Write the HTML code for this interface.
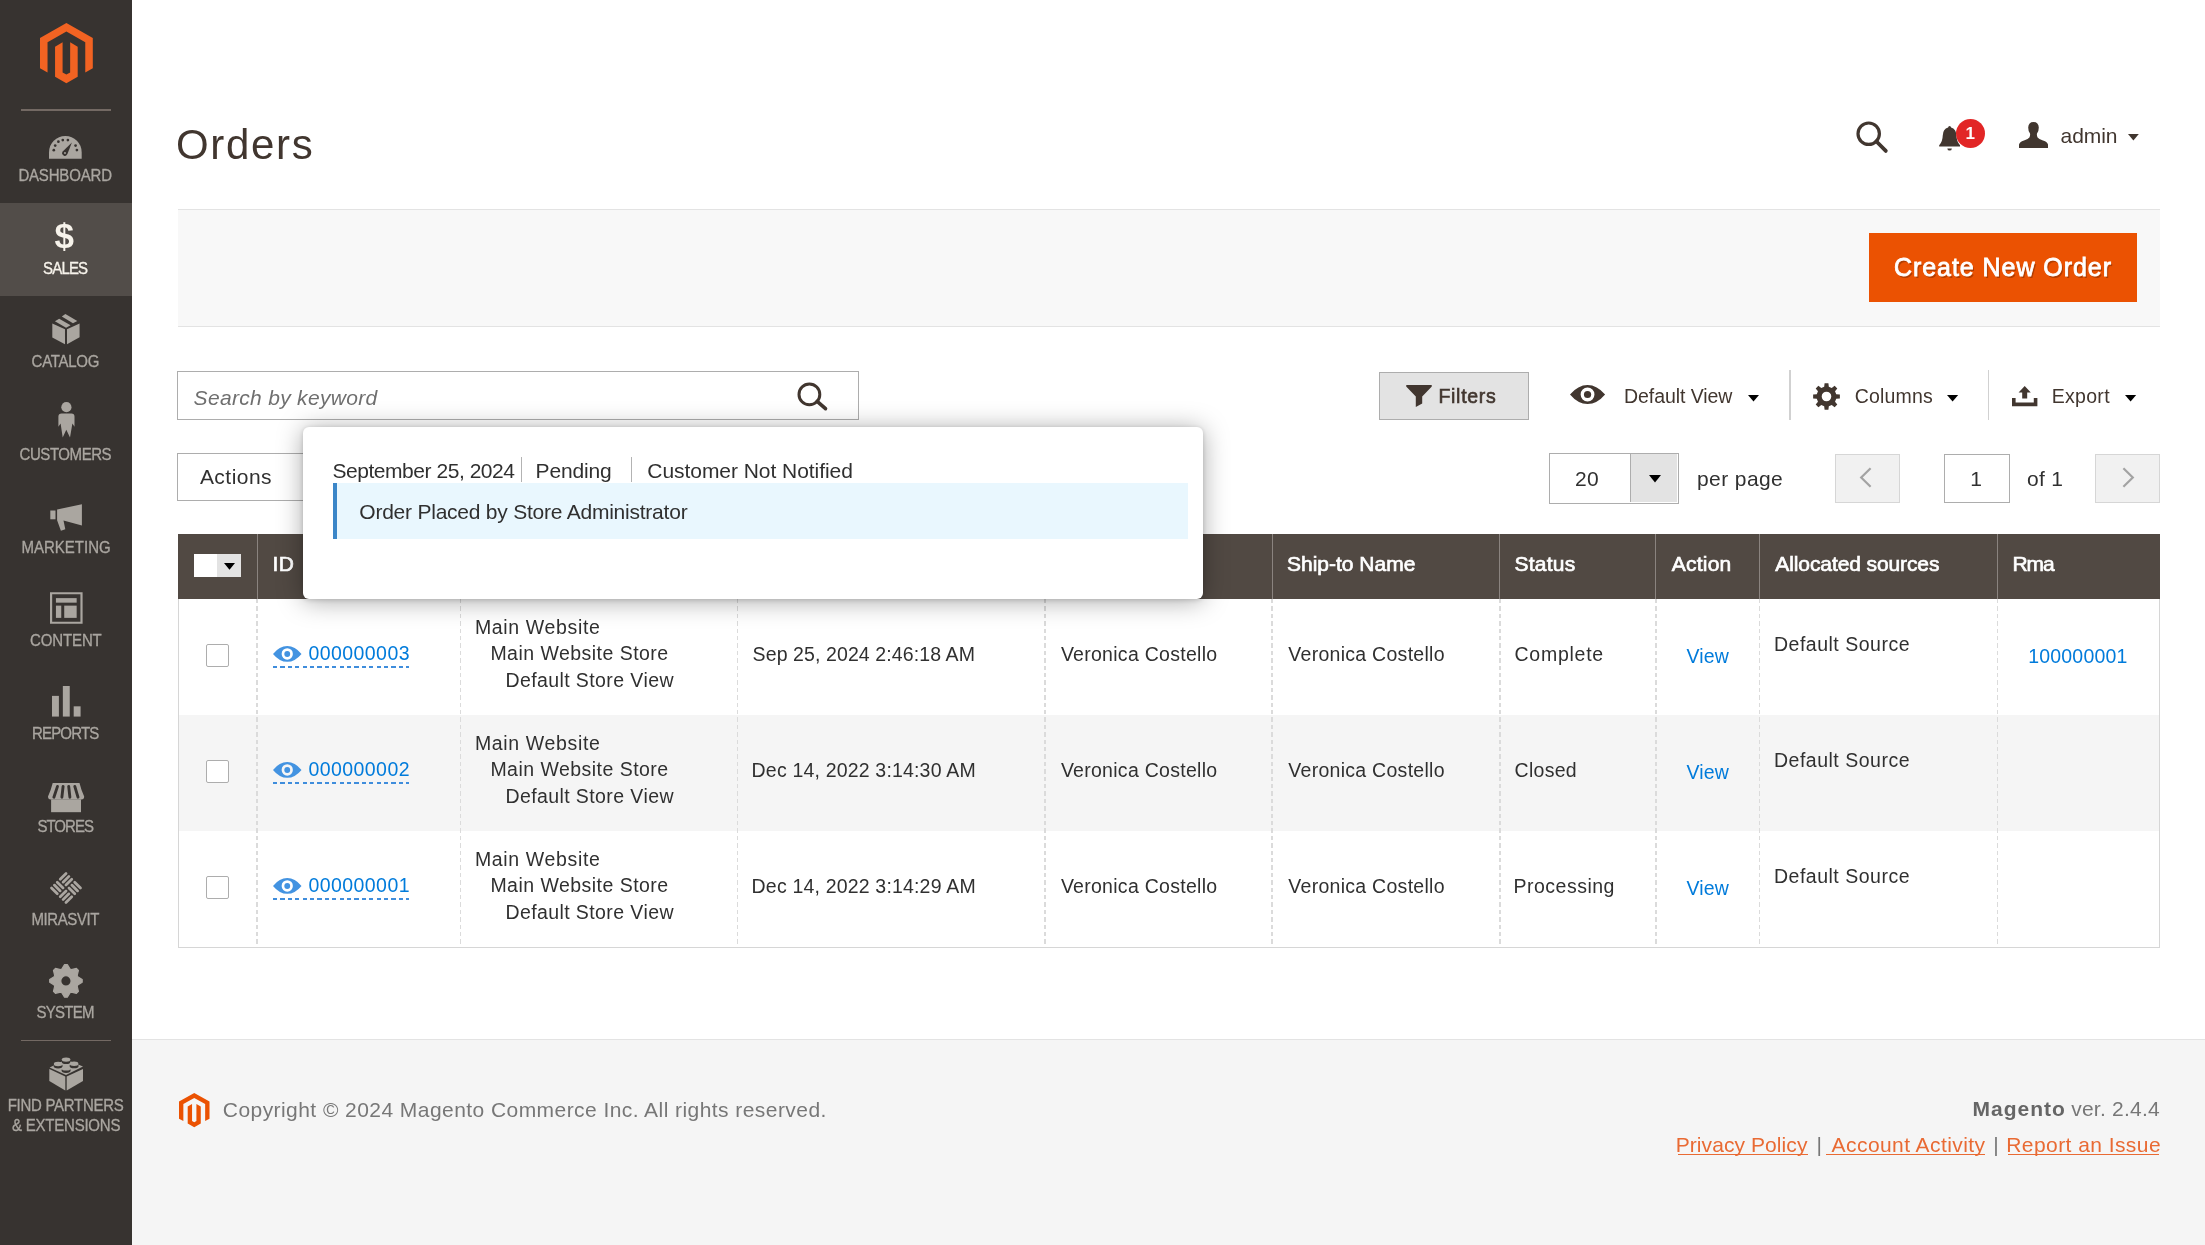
<!DOCTYPE html>
<html lang="en"><head><meta charset="utf-8"><title>Orders / Operations / Sales / Magento Admin</title>
<style>
html,body{margin:0;padding:0}
body{width:2205px;height:1245px;overflow:hidden;position:relative;background:#fff;font-family:"Liberation Sans",sans-serif}
#page{position:absolute;left:0;top:0;width:2205px;height:1245px;overflow:hidden;will-change:transform}
.b{position:absolute;box-sizing:border-box}
.i{position:absolute;display:block;overflow:visible}
.t{position:absolute;white-space:pre;line-height:1;font-family:"Liberation Sans",sans-serif}
.pop{position:absolute;left:0;top:0;z-index:5}
</style></head>
<body>
<div id="page">
<div class="b" style="left:0.0px;top:0.0px;width:132.0px;height:1245.0px;background:#373330;"></div>
<div class="b" style="left:0.0px;top:203.0px;width:132.0px;height:93.0px;background:#524d49;"></div>
<div class="b" style="left:20.7px;top:109.0px;width:90.6px;height:1.5px;background:#736963;"></div>
<div class="b" style="left:20.7px;top:1039.5px;width:90.6px;height:1.5px;background:#736963;"></div>
<svg class="i" style="left:39.8px;top:23.2px" width="52.8" height="60.2" viewBox="0 0 2145 2475" preserveAspectRatio="none"><g fill="#f26322"><path d="M1072.6 0L0 619.1v1236.6l306.2 177V795.8l766.4-442.5 766.4 442.5v1236.9l306.2-177V619.1z"/><path d="M1224.5 2032.8l-152.9 88.9-153.7-88.1V795.8l-306.2 176.9.5 1237.1 459.3 265.2 459.8-265.2V972.7l-306.2-176.9z"/></g></svg>
<svg class="i" style="left:49.2px;top:135.8px" width="32.7" height="22.8" viewBox="0 0 32.7 22.8" ><path fill="#aaa6a0" d="M0 22.8V16.4A16.35 16.35 0 0 1 32.7 16.4V22.8Z"/><circle cx="4.80" cy="14.20" r="1.35" fill="#373330"/><circle cx="6.20" cy="9.60" r="1.35" fill="#373330"/><circle cx="9.40" cy="5.70" r="1.35" fill="#373330"/><circle cx="13.80" cy="4.10" r="1.35" fill="#373330"/><circle cx="18.90" cy="4.10" r="1.35" fill="#373330"/><circle cx="26.60" cy="9.60" r="1.35" fill="#373330"/><circle cx="27.90" cy="14.10" r="1.35" fill="#373330"/><path fill="#373330" d="M22.9 6.6L18.4 18.1A2.7 2.7 0 1 1 13.7 15.5Z"/><circle cx="16" cy="17" r="0.95" fill="#aaa6a0"/></svg>
<svg class="i" style="left:51.5px;top:314.0px" width="27.7" height="30.2" viewBox="0 0 27.7 30.2" ><g fill="#aaa6a0"><path d="M2.9 7.2L7.2 4.7 18.6 11.2 14.1 13.7Z"/><path d="M9.8 2.5L13.4 0 25.3 6.9 21 9.2Z"/><path d="M.3 9.4L13 15.2V30.2L.3 23.5Z"/><path d="M15 15.2L27.6 9.4V23.2L15 30.2Z"/></g></svg>
<svg class="i" style="left:58.2px;top:401.8px" width="17.0" height="36.0" viewBox="0 0 17 36" ><g fill="#aaa6a0"><circle cx="8.4" cy="5.2" r="5.1"/><path d="M3.6 11.4H13.4Q16.5 11.4 16.5 14.5V24.8L14.4 21.5 12 35.6 8.3 27.8 4.7 35.6 2.6 21.5 .4 24.8V14.5Q.4 11.4 3.6 11.4Z"/></g></svg>
<svg class="i" style="left:50.0px;top:503.7px" width="32.0" height="27.0" viewBox="0 0 32 27" ><g fill="#aaa6a0"><path d="M.3 6.5H5.5V15.3H.3Z"/><path d="M7.1 5.6L31.9 .2V21.5L13.5 16.6 15.3 25.3 10.9 26.7 7.1 16.2Z"/></g></svg>
<svg class="i" style="left:49.6px;top:592.0px" width="32.6" height="32.0" viewBox="0 0 33 32" ><g fill="#aaa6a0"><path fill-rule="evenodd" d="M0 0H33V32H0ZM2.2 2.2V29.8H30.8V2.2Z"/><path d="M6 6H27V10.6H6Z"/><path d="M6 13.6H11.4V26H6Z"/><path d="M14.4 13.6H27V26H14.4Z"/></g></svg>
<svg class="i" style="left:51.7px;top:686.4px" width="28.6" height="30.6" viewBox="0 0 29 31" ><g fill="#aaa6a0"><path d="M0 10H7V31H0Z"/><path d="M11 0H18V31H11Z"/><path d="M22 20.6H29V31H22Z"/></g></svg>
<svg class="i" style="left:47.8px;top:783.0px" width="36.2" height="29.2" viewBox="0 0 36.2 29.2" ><g fill="#aaa6a0"><path d="M4.7 0H31.5Q33.5 8 36.2 13.6Q36.2 16.6 33.4 16.6H2.8Q0 16.6 0 13.6Q2.7 8 4.7 0Z"/><path d="M3.1 16.4H33V29.2H3.1Z"/></g><path d="M9.5 3.4L5.9 14.2M15.1 3.4L13.9 14.2M20.7 3.4L21.9 14.2M26.8 3.4L30 14.2" stroke="#373330" stroke-width="2.9" stroke-linecap="round" fill="none"/></svg>
<svg class="i" style="left:49.0px;top:871.0px" width="34.0" height="34.0" viewBox="-17 -17 34 34" ><g fill="#aaa6a0" transform="rotate(45)"><rect x="-11.60" y="-11.60" width="2.75" height="10.85" rx="1.3"/><rect x="-7.55" y="-11.60" width="2.75" height="10.85" rx="1.3"/><rect x="-3.50" y="-11.60" width="2.75" height="10.85" rx="1.3"/><rect x="-11.60" y="0.75" width="10.85" height="2.75" rx="1.3"/><rect x="-11.60" y="4.80" width="10.85" height="2.75" rx="1.3"/><rect x="-11.60" y="8.85" width="10.85" height="2.75" rx="1.3"/><rect x="0.75" y="-11.60" width="10.85" height="2.75" rx="1.3"/><rect x="0.75" y="-7.55" width="10.85" height="2.75" rx="1.3"/><rect x="0.75" y="-3.50" width="10.85" height="2.75" rx="1.3"/><rect x="0.75" y="0.75" width="2.75" height="10.85" rx="1.3"/><rect x="4.80" y="0.75" width="2.75" height="10.85" rx="1.3"/><rect x="8.85" y="0.75" width="2.75" height="10.85" rx="1.3"/></g></svg>
<svg class="i" style="left:48.9px;top:963.8px" width="33.9" height="33.8" viewBox="0 0 34 34" ><path fill="#aaa6a0" stroke="#aaa6a0" stroke-width="1.2" stroke-linejoin="round" fill-rule="evenodd" d="M12.83 5.11 L15.58 0.66 L18.42 0.66 L21.17 5.11 L22.45 5.64 L27.55 4.45 L29.55 6.45 L28.36 11.55 L28.89 12.83 L33.34 15.58 L33.34 18.42 L28.89 21.17 L28.36 22.45 L29.55 27.55 L27.55 29.55 L22.45 28.36 L21.17 28.89 L18.42 33.34 L15.58 33.34 L12.83 28.89 L11.55 28.36 L6.45 29.55 L4.45 27.55 L5.64 22.45 L5.11 21.17 L0.66 18.42 L0.66 15.58 L5.11 12.83 L5.64 11.55 L4.45 6.45 L6.45 4.45 L11.55 5.64Z M11.80 17.00 a5.20 5.20 0 1 0 10.40 0 a5.20 5.20 0 1 0 -10.40 0Z"/></svg>
<svg class="i" style="left:48.6px;top:1056.6px" width="34.2" height="33.8" viewBox="0 0 34.2 33.8" ><g fill="#aaa6a0"><path d="M17.1 2.4L34 9.6 17 18 .6 10.6Z"/><path d="M.3 12L16.3 19.4V33.6L.3 24Z"/><path d="M17.7 19.4L34 12V24L17.7 33.6Z"/></g><ellipse cx="17.1" cy="4.7" rx="4.5" ry="2.4" fill="#373330"/><ellipse cx="17.1" cy="2.6" rx="4.3" ry="2.2" fill="#aaa6a0"/><ellipse cx="9.1" cy="9.1" rx="4.5" ry="2.4" fill="#373330"/><ellipse cx="9.1" cy="7.0" rx="4.3" ry="2.2" fill="#aaa6a0"/><ellipse cx="25.1" cy="8.9" rx="4.5" ry="2.4" fill="#373330"/><ellipse cx="25.1" cy="6.8" rx="4.3" ry="2.2" fill="#aaa6a0"/><ellipse cx="17.1" cy="13.5" rx="4.5" ry="2.4" fill="#373330"/><ellipse cx="17.1" cy="11.4" rx="4.3" ry="2.2" fill="#aaa6a0"/></svg>
<span class="t" style="left:54.4px;top:217.6px;font-size:35px;font-weight:700;color:#f7f3eb">$</span>
<svg class="i" style="left:1853.8px;top:118.7px" width="35.8" height="35.9" viewBox="0 0 35.80 35.90" ><circle cx="14.70" cy="14.70" r="10.70" fill="none" stroke="#41362f" stroke-width="3.20"/><path d="M22.24 22.29L31.80 31.90" stroke="#41362f" stroke-width="3.80" stroke-linecap="round"/></svg>
<svg class="i" style="left:1939.2px;top:125.6px" width="21.2" height="24.8" viewBox="0 0 21 25" ><g fill="#41362f"><path d="M10.5 0Q11.9 0 12 1.6Q17.2 3 17.4 9.6Q17.6 16 21 19.4V20.6H0V19.4Q3.4 16 3.6 9.6Q3.8 3 9 1.6Q9.1 0 10.5 0Z"/><path d="M8.2 22.6H12.8Q12.6 24.8 10.5 24.8T8.2 22.6Z"/></g></svg>
<svg class="i" style="left:2018.9px;top:121.5px" width="29.0" height="26.0" viewBox="0 0 29 26" ><path fill="#41362f" d="M14.5 0Q19.6 0 19.8 5.6Q19.8 9.4 18 11.6Q17.6 13.8 18.6 15.4Q19.6 17 24 18.4Q28.6 19.8 29 22.6V26H0V22.6Q.4 19.8 5 18.4Q9.4 17 10.4 15.4Q11.4 13.8 11 11.6Q9.2 9.4 9.2 5.6Q9.4 0 14.5 0Z"/></svg>
<svg class="i" style="left:2127.8px;top:133.8px" width="10.8" height="6.6" viewBox="0 0 10 6" preserveAspectRatio="none"><path fill="#41362f" d="M0 0H10L5 6Z"/></svg>
<div class="b" style="left:1955.8px;top:118.7px;width:29.2px;height:29.2px;background:#e22626;border-radius:50%;"></div>
<span class="t" style="left:1965.6px;top:124.6px;font-size:17px;font-weight:700;color:#fff">1</span>
<div class="b" style="left:178.0px;top:209.0px;width:1982.0px;height:117.5px;background:#f8f8f8;border-top:1.5px solid #e3e3e3;border-bottom:1.5px solid #e3e3e3;"></div>
<div class="b" style="left:1869.4px;top:233.2px;width:268.0px;height:69.0px;background:#eb5202;"></div>
<div class="b" style="left:177.4px;top:371.1px;width:681.6px;height:48.7px;border:1.5px solid #adadad;background:#fff;"></div>
<div class="b" style="left:1379.0px;top:371.6px;width:150.0px;height:48.6px;border:1.5px solid #adadad;background:#e3e3e3;"></div>
<div class="b" style="left:1789.4px;top:369.5px;width:1.3px;height:50.0px;background:#d1d1d1;"></div>
<div class="b" style="left:1988.1px;top:369.5px;width:1.3px;height:50.0px;background:#d1d1d1;"></div>
<div class="b" style="left:177.4px;top:453.0px;width:242.6px;height:48.3px;border:1.5px solid #adadad;background:#fff;"></div>
<div class="b" style="left:1549.3px;top:452.8px;width:129.7px;height:50.8px;border:1.5px solid #adadad;background:#fff;"></div>
<div class="b" style="left:1630.4px;top:454.3px;width:47.1px;height:47.8px;background:#e3e3e3;border-left:1.5px solid #adadad;"></div>
<div class="b" style="left:1834.6px;top:454.0px;width:65.8px;height:49.0px;background:#f1f1f1;border:1.5px solid #d6d6d6;"></div>
<div class="b" style="left:1944.2px;top:454.0px;width:65.4px;height:49.0px;border:1.5px solid #adadad;background:#fff;"></div>
<div class="b" style="left:2094.7px;top:454.0px;width:64.9px;height:49.0px;background:#f1f1f1;border:1.5px solid #d6d6d6;"></div>
<div class="b" style="left:177.6px;top:534.0px;width:1982.1px;height:64.5px;background:#514943;"></div>
<div class="b" style="left:256.5px;top:534.0px;width:1.2px;height:64.5px;background:#8a837f;"></div>
<div class="b" style="left:460.0px;top:534.0px;width:1.2px;height:64.5px;background:#8a837f;"></div>
<div class="b" style="left:736.7px;top:534.0px;width:1.2px;height:64.5px;background:#8a837f;"></div>
<div class="b" style="left:1044.4px;top:534.0px;width:1.2px;height:64.5px;background:#8a837f;"></div>
<div class="b" style="left:1271.5px;top:534.0px;width:1.2px;height:64.5px;background:#8a837f;"></div>
<div class="b" style="left:1499.2px;top:534.0px;width:1.2px;height:64.5px;background:#8a837f;"></div>
<div class="b" style="left:1655.3px;top:534.0px;width:1.2px;height:64.5px;background:#8a837f;"></div>
<div class="b" style="left:1758.9px;top:534.0px;width:1.2px;height:64.5px;background:#8a837f;"></div>
<div class="b" style="left:1996.7px;top:534.0px;width:1.2px;height:64.5px;background:#8a837f;"></div>
<div class="b" style="left:177.6px;top:715.0px;width:1982.1px;height:116.0px;background:#f5f5f5;"></div>
<div class="b" style="left:177.6px;top:598.5px;width:1982.1px;height:349.3px;border:1.5px solid #d6d6d6;border-top:none;"></div>
<div class="b" style="left:256.4px;top:598.5px;width:1.5px;height:347.8px;background:repeating-linear-gradient(180deg,#dbdbdb 0,#dbdbdb 4.5px,transparent 4.5px,transparent 7.4px);"></div>
<div class="b" style="left:459.9px;top:598.5px;width:1.5px;height:347.8px;background:repeating-linear-gradient(180deg,#dbdbdb 0,#dbdbdb 4.5px,transparent 4.5px,transparent 7.4px);"></div>
<div class="b" style="left:736.5px;top:598.5px;width:1.5px;height:347.8px;background:repeating-linear-gradient(180deg,#dbdbdb 0,#dbdbdb 4.5px,transparent 4.5px,transparent 7.4px);"></div>
<div class="b" style="left:1044.2px;top:598.5px;width:1.5px;height:347.8px;background:repeating-linear-gradient(180deg,#dbdbdb 0,#dbdbdb 4.5px,transparent 4.5px,transparent 7.4px);"></div>
<div class="b" style="left:1271.3px;top:598.5px;width:1.5px;height:347.8px;background:repeating-linear-gradient(180deg,#dbdbdb 0,#dbdbdb 4.5px,transparent 4.5px,transparent 7.4px);"></div>
<div class="b" style="left:1499.0px;top:598.5px;width:1.5px;height:347.8px;background:repeating-linear-gradient(180deg,#dbdbdb 0,#dbdbdb 4.5px,transparent 4.5px,transparent 7.4px);"></div>
<div class="b" style="left:1655.2px;top:598.5px;width:1.5px;height:347.8px;background:repeating-linear-gradient(180deg,#dbdbdb 0,#dbdbdb 4.5px,transparent 4.5px,transparent 7.4px);"></div>
<div class="b" style="left:1758.8px;top:598.5px;width:1.5px;height:347.8px;background:repeating-linear-gradient(180deg,#dbdbdb 0,#dbdbdb 4.5px,transparent 4.5px,transparent 7.4px);"></div>
<div class="b" style="left:1996.5px;top:598.5px;width:1.5px;height:347.8px;background:repeating-linear-gradient(180deg,#dbdbdb 0,#dbdbdb 4.5px,transparent 4.5px,transparent 7.4px);"></div>
<div class="b" style="left:194.0px;top:553.6px;width:46.7px;height:23.1px;background:#fff;"></div>
<div class="b" style="left:217.0px;top:553.6px;width:23.7px;height:23.1px;background:#e3e3e3;"></div>
<div class="b" style="left:205.6px;top:643.6px;width:23.4px;height:23.4px;border:1.5px solid #adadad;border-radius:2px;background:#fff;"></div>
<div class="b" style="left:272.9px;top:666.4px;width:136.6px;height:1.6px;background:repeating-linear-gradient(90deg,#3f8ddc 0,#3f8ddc 4.2px,transparent 4.2px,transparent 7.4px);"></div>
<div class="b" style="left:205.6px;top:759.6px;width:23.4px;height:23.4px;border:1.5px solid #adadad;border-radius:2px;background:#fff;"></div>
<div class="b" style="left:272.9px;top:782.4px;width:136.6px;height:1.6px;background:repeating-linear-gradient(90deg,#3f8ddc 0,#3f8ddc 4.2px,transparent 4.2px,transparent 7.4px);"></div>
<div class="b" style="left:205.6px;top:875.6px;width:23.4px;height:23.4px;border:1.5px solid #adadad;border-radius:2px;background:#fff;"></div>
<div class="b" style="left:272.9px;top:898.4px;width:136.6px;height:1.6px;background:repeating-linear-gradient(90deg,#3f8ddc 0,#3f8ddc 4.2px,transparent 4.2px,transparent 7.4px);"></div>
<svg class="i" style="left:272.9px;top:646.0px" width="28.5" height="15.8" viewBox="0 0 35 19" preserveAspectRatio="none"><path fill="#4393e1" fill-rule="evenodd" d="M0 9.5Q8 0 17.5 0T35 9.5Q27 19 17.5 19T0 9.5ZM17.5 2.6A6.9 6.9 0 1 0 17.5 16.4A6.9 6.9 0 1 0 17.5 2.6Z"/><circle cx="17.5" cy="9.5" r="3.6" fill="#4393e1"/></svg>
<svg class="i" style="left:272.9px;top:762.0px" width="28.5" height="15.8" viewBox="0 0 35 19" preserveAspectRatio="none"><path fill="#4393e1" fill-rule="evenodd" d="M0 9.5Q8 0 17.5 0T35 9.5Q27 19 17.5 19T0 9.5ZM17.5 2.6A6.9 6.9 0 1 0 17.5 16.4A6.9 6.9 0 1 0 17.5 2.6Z"/><circle cx="17.5" cy="9.5" r="3.6" fill="#4393e1"/></svg>
<svg class="i" style="left:272.9px;top:878.0px" width="28.5" height="15.8" viewBox="0 0 35 19" preserveAspectRatio="none"><path fill="#4393e1" fill-rule="evenodd" d="M0 9.5Q8 0 17.5 0T35 9.5Q27 19 17.5 19T0 9.5ZM17.5 2.6A6.9 6.9 0 1 0 17.5 16.4A6.9 6.9 0 1 0 17.5 2.6Z"/><circle cx="17.5" cy="9.5" r="3.6" fill="#4393e1"/></svg>
<svg class="i" style="left:794.9px;top:379.9px" width="34.5" height="32.7" viewBox="0 0 34.50 32.70" ><circle cx="14.40" cy="14.40" r="10.40" fill="none" stroke="#41362f" stroke-width="3.00"/><path d="M22.18 21.31L30.50 28.70" stroke="#41362f" stroke-width="3.60" stroke-linecap="round"/></svg>
<svg class="i" style="left:1405.5px;top:384.9px" width="26.0" height="22.0" viewBox="0 0 26 22" ><path fill="#41362f" d="M.6 0H25.4Q26.4 .6 25.6 1.8L16.2 11.6V18.6L9.8 22V11.6L.4 1.8Q-.4 .6 .6 0Z"/></svg>
<svg class="i" style="left:1569.9px;top:385.3px" width="35.1" height="19.0" viewBox="0 0 35 19" preserveAspectRatio="none"><path fill="#41362f" fill-rule="evenodd" d="M0 9.5Q8 0 17.5 0T35 9.5Q27 19 17.5 19T0 9.5ZM17.5 2.6A6.9 6.9 0 1 0 17.5 16.4A6.9 6.9 0 1 0 17.5 2.6Z"/><circle cx="17.5" cy="9.5" r="3.6" fill="#41362f"/></svg>
<svg class="i" style="left:1748.1px;top:394.9px" width="11.0" height="6.6" viewBox="0 0 10 6" preserveAspectRatio="none"><path fill="#000" d="M0 0H10L5 6Z"/></svg>
<svg class="i" style="left:1812.8px;top:383.2px" width="27.0" height="27.0" viewBox="0 0 27 27" ><path fill="#41362f" fill-rule="evenodd" d="M11.17 3.78 L11.60 0.13 L15.40 0.13 L15.83 3.78 L18.72 4.97 L21.61 2.70 L24.30 5.39 L22.03 8.28 L23.22 11.17 L26.87 11.60 L26.87 15.40 L23.22 15.83 L22.03 18.72 L24.30 21.61 L21.61 24.30 L18.72 22.03 L15.83 23.22 L15.40 26.87 L11.60 26.87 L11.17 23.22 L8.28 22.03 L5.39 24.30 L2.70 21.61 L4.97 18.72 L3.78 15.83 L0.13 15.40 L0.13 11.60 L3.78 11.17 L4.97 8.28 L2.70 5.39 L5.39 2.70 L8.28 4.97Z M8.70 13.50 a4.80 4.80 0 1 0 9.60 0 a4.80 4.80 0 1 0 -9.60 0Z"/></svg>
<svg class="i" style="left:1947.3px;top:394.9px" width="11.2" height="6.6" viewBox="0 0 10 6" preserveAspectRatio="none"><path fill="#000" d="M0 0H10L5 6Z"/></svg>
<svg class="i" style="left:2012.3px;top:386.2px" width="25.4" height="20.2" viewBox="0 0 25.4 20.2" ><g fill="#41362f"><path d="M0 12H3.6V16.6H21.8V12H25.4V20.2H0Z"/><path d="M12.7 0L18.8 6.4H15.2V12.4H10.2V6.4H6.6Z"/></g></svg>
<svg class="i" style="left:2124.6px;top:394.9px" width="11.2" height="6.6" viewBox="0 0 10 6" preserveAspectRatio="none"><path fill="#000" d="M0 0H10L5 6Z"/></svg>
<svg class="i" style="left:1649.4px;top:474.8px" width="12.0" height="7.4" viewBox="0 0 10 6" preserveAspectRatio="none"><path fill="#000" d="M0 0H10L5 6Z"/></svg>
<svg class="i" style="left:1858.0px;top:466.0px" width="16.0" height="23.0" viewBox="0 0 16 23" ><path d="M12.6 2.2L3.2 11.5 12.6 20.8" fill="none" stroke="#a3a3a3" stroke-width="2.2"/></svg>
<svg class="i" style="left:2119.5px;top:466.0px" width="16.0" height="23.0" viewBox="0 0 16 23" ><path d="M3.4 2.2L12.8 11.5 3.4 20.8" fill="none" stroke="#a3a3a3" stroke-width="2.2"/></svg>
<svg class="i" style="left:223.6px;top:562.5px" width="11.0" height="6.8" viewBox="0 0 10 6" preserveAspectRatio="none"><path fill="#000" d="M0 0H10L5 6Z"/></svg>
<div class="b" style="left:132.0px;top:1038.5px;width:2073.0px;height:206.5px;background:#f5f5f5;border-top:1.5px solid #e3e3e3;"></div>
<svg class="i" style="left:178.5px;top:1093.2px" width="30.5" height="34.2" viewBox="0 0 2145 2475" preserveAspectRatio="none"><g fill="#eb5202"><path d="M1072.6 0L0 619.1v1236.6l306.2 177V795.8l766.4-442.5 766.4 442.5v1236.9l306.2-177V619.1z"/><path d="M1224.5 2032.8l-152.9 88.9-153.7-88.1V795.8l-306.2 176.9.5 1237.1 459.3 265.2 459.8-265.2V972.7l-306.2-176.9z"/></g></svg>
<div class="b" style="left:1677.7px;top:1153.6px;width:130.1px;height:1.5px;background:#e96a33;"></div>
<div class="b" style="left:1825.8px;top:1153.6px;width:159.3px;height:1.5px;background:#e96a33;"></div>
<div class="b" style="left:2008.2px;top:1153.6px;width:151.1px;height:1.5px;background:#e96a33;"></div>
<span class="t" style="left:18.4px;top:168.3px;font-size:15px;color:#aaa6a0;letter-spacing:-0.18px;transform:scaleY(1.09);transform-origin:0 12.7px;-webkit-text-stroke:0.3px #aaa6a0;">DASHBOARD</span>
<span class="t" style="left:43.1px;top:261.3px;font-size:15px;color:#f7f3eb;letter-spacing:-0.85px;transform:scaleY(1.09);transform-origin:0 12.7px;-webkit-text-stroke:0.3px #f7f3eb;">SALES</span>
<span class="t" style="left:31.6px;top:354.3px;font-size:15px;color:#aaa6a0;letter-spacing:-0.27px;transform:scaleY(1.09);transform-origin:0 12.7px;-webkit-text-stroke:0.3px #aaa6a0;">CATALOG</span>
<span class="t" style="left:19.5px;top:447.3px;font-size:15px;color:#aaa6a0;letter-spacing:-0.43px;transform:scaleY(1.09);transform-origin:0 12.7px;-webkit-text-stroke:0.3px #aaa6a0;">CUSTOMERS</span>
<span class="t" style="left:21.6px;top:540.3px;font-size:15px;color:#aaa6a0;letter-spacing:-0.02px;transform:scaleY(1.09);transform-origin:0 12.7px;-webkit-text-stroke:0.3px #aaa6a0;">MARKETING</span>
<span class="t" style="left:30.0px;top:633.3px;font-size:15px;color:#aaa6a0;letter-spacing:-0.12px;transform:scaleY(1.09);transform-origin:0 12.7px;-webkit-text-stroke:0.3px #aaa6a0;">CONTENT</span>
<span class="t" style="left:32.0px;top:726.3px;font-size:15px;color:#aaa6a0;letter-spacing:-0.83px;transform:scaleY(1.09);transform-origin:0 12.7px;-webkit-text-stroke:0.3px #aaa6a0;">REPORTS</span>
<span class="t" style="left:37.4px;top:819.3px;font-size:15px;color:#aaa6a0;letter-spacing:-0.96px;transform:scaleY(1.09);transform-origin:0 12.7px;-webkit-text-stroke:0.3px #aaa6a0;">STORES</span>
<span class="t" style="left:31.4px;top:912.3px;font-size:15px;color:#aaa6a0;letter-spacing:-0.40px;transform:scaleY(1.09);transform-origin:0 12.7px;-webkit-text-stroke:0.3px #aaa6a0;">MIRASVIT</span>
<span class="t" style="left:36.4px;top:1005.3px;font-size:15px;color:#aaa6a0;letter-spacing:-0.70px;transform:scaleY(1.09);transform-origin:0 12.7px;-webkit-text-stroke:0.3px #aaa6a0;">SYSTEM</span>
<span class="t" style="left:7.7px;top:1098.3px;font-size:15px;color:#aaa6a0;letter-spacing:-0.28px;transform:scaleY(1.09);transform-origin:0 12.7px;-webkit-text-stroke:0.3px #aaa6a0;">FIND PARTNERS</span>
<span class="t" style="left:12.0px;top:1118.3px;font-size:15px;color:#aaa6a0;letter-spacing:-0.22px;transform:scaleY(1.09);transform-origin:0 12.7px;-webkit-text-stroke:0.3px #aaa6a0;">&amp; EXTENSIONS</span>
<span class="t" style="left:176.0px;top:123.8px;font-size:42px;color:#41362f;letter-spacing:1.66px;">Orders</span>
<span class="t" style="left:2060.6px;top:125.3px;font-size:21px;color:#41362f;letter-spacing:-0.07px;">admin</span>
<span class="t" style="left:1893.9px;top:255.1px;font-size:25px;color:#ffffff;letter-spacing:0.95px;-webkit-text-stroke:0.80px #ffffff;text-shadow:1.5px 1.5px 0 rgba(0,0,0,.25);">Create New Order</span>
<span class="t" style="left:193.6px;top:386.5px;font-size:21px;color:#6f6f6f;letter-spacing:0.31px;font-style:italic;">Search by keyword</span>
<span class="t" style="left:1438.4px;top:387.0px;font-size:19.5px;color:#41362f;letter-spacing:0.72px;-webkit-text-stroke:0.62px #41362f;">Filters</span>
<span class="t" style="left:1624.0px;top:387.0px;font-size:19.5px;color:#41362f;letter-spacing:-0.07px;">Default View</span>
<span class="t" style="left:1854.8px;top:387.0px;font-size:19.5px;color:#41362f;letter-spacing:0.15px;">Columns</span>
<span class="t" style="left:2051.7px;top:387.0px;font-size:19.5px;color:#41362f;letter-spacing:0.30px;">Export</span>
<span class="t" style="left:199.9px;top:466.4px;font-size:21px;color:#303030;letter-spacing:0.47px;">Actions</span>
<span class="t" style="left:1575.0px;top:468.1px;font-size:21px;color:#303030;letter-spacing:0.40px;">20</span>
<span class="t" style="left:1697.0px;top:468.1px;font-size:21px;color:#303030;letter-spacing:0.41px;">per page</span>
<span class="t" style="left:1970.3px;top:468.1px;font-size:21px;color:#303030;">1</span>
<span class="t" style="left:2027.0px;top:468.1px;font-size:21px;color:#303030;letter-spacing:0.33px;">of 1</span>
<span class="t" style="left:272.4px;top:553.2px;font-size:21px;color:#ffffff;letter-spacing:0.60px;-webkit-text-stroke:0.67px #ffffff;">ID</span>
<span class="t" style="left:1287.0px;top:553.2px;font-size:21px;color:#ffffff;-webkit-text-stroke:0.67px #ffffff;">Ship-to Name</span>
<span class="t" style="left:1514.5px;top:553.2px;font-size:21px;color:#ffffff;letter-spacing:0.24px;-webkit-text-stroke:0.67px #ffffff;">Status</span>
<span class="t" style="left:1671.7px;top:553.2px;font-size:21px;color:#ffffff;letter-spacing:0.24px;-webkit-text-stroke:0.67px #ffffff;">Action</span>
<span class="t" style="left:1775.3px;top:553.2px;font-size:21px;color:#ffffff;letter-spacing:-0.10px;-webkit-text-stroke:0.67px #ffffff;">Allocated sources</span>
<span class="t" style="left:2012.4px;top:553.2px;font-size:21px;color:#ffffff;letter-spacing:-1.00px;-webkit-text-stroke:0.67px #ffffff;">Rma</span>
<span class="t" style="left:222.8px;top:1098.5px;font-size:21px;color:#777777;letter-spacing:0.44px;">Copyright &copy; 2024 Magento Commerce Inc. All rights reserved.</span>
<span class="t" style="left:1972.6px;top:1098.3px;font-size:21px;color:#666666;letter-spacing:1.00px;font-weight:700;">Magento</span>
<span class="t" style="left:2071.2px;top:1098.3px;font-size:21px;color:#777777;letter-spacing:0.24px;">ver. 2.4.4</span>
<span class="t" style="left:1675.7px;top:1134.2px;font-size:21px;color:#e96a33;letter-spacing:0.08px;">Privacy Policy</span>
<span class="t" style="left:1816.6px;top:1134.2px;font-size:21px;color:#777777;">|</span>
<span class="t" style="left:1831.6px;top:1134.2px;font-size:21px;color:#e96a33;letter-spacing:0.43px;">Account Activity</span>
<span class="t" style="left:1993.3px;top:1134.2px;font-size:21px;color:#777777;">|</span>
<span class="t" style="left:2006.2px;top:1134.2px;font-size:21px;color:#e96a33;letter-spacing:0.44px;">Report an Issue</span>
<span class="t" style="left:308.6px;top:644.0px;font-size:19.5px;color:#007bdb;letter-spacing:0.41px;">000000003</span>
<span class="t" style="left:474.9px;top:617.5px;font-size:19.5px;color:#303030;letter-spacing:0.65px;">Main Website</span>
<span class="t" style="left:490.4px;top:644.2px;font-size:19.5px;color:#303030;letter-spacing:0.47px;">Main Website Store</span>
<span class="t" style="left:505.4px;top:670.8px;font-size:19.5px;color:#303030;letter-spacing:0.41px;">Default Store View</span>
<span class="t" style="left:752.6px;top:644.8px;font-size:19.5px;color:#303030;letter-spacing:0.10px;">Sep 25, 2024 2:46:18 AM</span>
<span class="t" style="left:1060.9px;top:644.8px;font-size:19.5px;color:#303030;letter-spacing:0.28px;">Veronica Costello</span>
<span class="t" style="left:1288.3px;top:644.8px;font-size:19.5px;color:#303030;letter-spacing:0.28px;">Veronica Costello</span>
<span class="t" style="left:1514.5px;top:644.8px;font-size:19.5px;color:#303030;letter-spacing:0.74px;">Complete</span>
<span class="t" style="left:1686.5px;top:647.3px;font-size:19.5px;color:#007bdb;letter-spacing:0.13px;">View</span>
<span class="t" style="left:1774.0px;top:635.1px;font-size:19.5px;color:#303030;letter-spacing:0.50px;">Default Source</span>
<span class="t" style="left:2028.2px;top:647.3px;font-size:19.5px;color:#007bdb;letter-spacing:0.20px;">100000001</span>
<span class="t" style="left:308.6px;top:760.0px;font-size:19.5px;color:#007bdb;letter-spacing:0.41px;">000000002</span>
<span class="t" style="left:474.9px;top:733.5px;font-size:19.5px;color:#303030;letter-spacing:0.65px;">Main Website</span>
<span class="t" style="left:490.4px;top:760.2px;font-size:19.5px;color:#303030;letter-spacing:0.47px;">Main Website Store</span>
<span class="t" style="left:505.4px;top:786.8px;font-size:19.5px;color:#303030;letter-spacing:0.41px;">Default Store View</span>
<span class="t" style="left:751.6px;top:760.8px;font-size:19.5px;color:#303030;letter-spacing:0.18px;">Dec 14, 2022 3:14:30 AM</span>
<span class="t" style="left:1060.9px;top:760.8px;font-size:19.5px;color:#303030;letter-spacing:0.28px;">Veronica Costello</span>
<span class="t" style="left:1288.3px;top:760.8px;font-size:19.5px;color:#303030;letter-spacing:0.28px;">Veronica Costello</span>
<span class="t" style="left:1514.5px;top:760.8px;font-size:19.5px;color:#303030;letter-spacing:0.30px;">Closed</span>
<span class="t" style="left:1686.5px;top:763.3px;font-size:19.5px;color:#007bdb;letter-spacing:0.13px;">View</span>
<span class="t" style="left:1774.0px;top:751.1px;font-size:19.5px;color:#303030;letter-spacing:0.50px;">Default Source</span>
<span class="t" style="left:308.6px;top:876.0px;font-size:19.5px;color:#007bdb;letter-spacing:0.41px;">000000001</span>
<span class="t" style="left:474.9px;top:849.5px;font-size:19.5px;color:#303030;letter-spacing:0.65px;">Main Website</span>
<span class="t" style="left:490.4px;top:876.2px;font-size:19.5px;color:#303030;letter-spacing:0.47px;">Main Website Store</span>
<span class="t" style="left:505.4px;top:902.8px;font-size:19.5px;color:#303030;letter-spacing:0.41px;">Default Store View</span>
<span class="t" style="left:751.6px;top:876.8px;font-size:19.5px;color:#303030;letter-spacing:0.18px;">Dec 14, 2022 3:14:29 AM</span>
<span class="t" style="left:1060.9px;top:876.8px;font-size:19.5px;color:#303030;letter-spacing:0.28px;">Veronica Costello</span>
<span class="t" style="left:1288.3px;top:876.8px;font-size:19.5px;color:#303030;letter-spacing:0.28px;">Veronica Costello</span>
<span class="t" style="left:1513.5px;top:876.8px;font-size:19.5px;color:#303030;letter-spacing:0.50px;">Processing</span>
<span class="t" style="left:1686.5px;top:879.3px;font-size:19.5px;color:#007bdb;letter-spacing:0.13px;">View</span>
<span class="t" style="left:1774.0px;top:867.1px;font-size:19.5px;color:#303030;letter-spacing:0.50px;">Default Source</span>
<div class="pop">
<div class="b" style="left:303.3px;top:426.6px;width:899.7px;height:172.4px;background:#fff;border-radius:6px;box-shadow:0 1px 5px rgba(0,0,0,.16),0 2px 26px rgba(0,0,0,.34);"></div>
<div class="b" style="left:333.2px;top:483.2px;width:854.8px;height:55.7px;background:#e9f7fe;border-left:4.7px solid #3b86c8;"></div>
<div class="b" style="left:520.7px;top:456.7px;width:1.5px;height:25.8px;background:#b3b3b3;"></div>
<div class="b" style="left:630.8px;top:456.7px;width:1.5px;height:25.8px;background:#b3b3b3;"></div>
<span class="t" style="left:332.5px;top:459.7px;font-size:21px;color:#303030;letter-spacing:-0.46px;">September 25, 2024</span>
<span class="t" style="left:535.5px;top:459.7px;font-size:21px;color:#303030;letter-spacing:-0.13px;">Pending</span>
<span class="t" style="left:647.3px;top:459.7px;font-size:21px;color:#303030;letter-spacing:-0.05px;">Customer Not Notified</span>
<span class="t" style="left:359.3px;top:501.3px;font-size:21px;color:#303030;letter-spacing:-0.23px;">Order Placed by Store Administrator</span>
</div>
</div>
</body></html>
